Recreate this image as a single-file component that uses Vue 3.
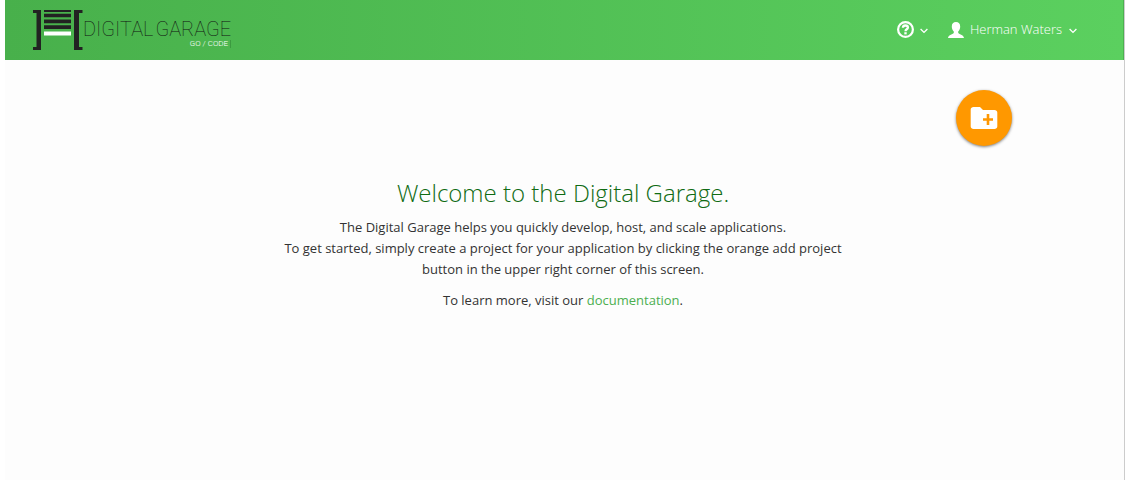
<script setup>
const user = 'Herman Waters'
</script>

<template>
  <div class="page">
    <header class="bar">
      <a class="brand" href="#" aria-label="Digital Garage">
        <svg class="mark" width="50" height="40" viewBox="0 0 50 40" aria-hidden="true">
          <g fill="#222">
            <path d="M0 0h8v40H0v-3h3.500V3H0z" />
            <path d="M49.500 0H41v40h8.500v-3H46V3h3.500z" />
            <path d="M11 0h27v2H11zM11 3.800h27v3.500H11zM11 9.500h27v3.800H11zM11 15.200h27v3.800H11z" />
          </g>
          <path fill="#fff" d="M11 21.500h27v4H11z" />
        </svg>
        <span class="words">
          <span class="name"><span>DIGITAL</span><span>GARAGE</span></span>
          <span class="tag">GO / CODE <i class="cursor"></i></span>
        </span>
      </a>
      <nav class="tools">
        <button class="tool" type="button" aria-label="Help">
          <svg width="17" height="17" viewBox="0 0 17 17" fill="none" stroke="#fff" aria-hidden="true">
            <circle cx="8.500" cy="8.500" r="7.400" stroke-width="2.200" />
            <path d="M5.900 6.800C6 4.900 7.100 4.500 8.400 4.500c1.500 0 2.500.8 2.500 2 0 1.800-2.400 1.700-2.400 3.700" stroke-width="2.300" />
            <path d="M7.300 11.200h2.400v2.200H7.300z" fill="#fff" stroke="none" />
          </svg>
          <svg class="chevron" width="8" height="6" viewBox="0 0 8 6" fill="none" stroke="#fff" stroke-width="1.300" aria-hidden="true"><path d="M.6 1 4 4.400 7.400 1" /></svg>
        </button>
        <button class="tool" type="button">
          <svg width="16" height="16" viewBox="0 0 16 16" fill="#fff" aria-hidden="true">
            <path d="M8 0c2.700 0 4.200 1.800 4.200 4.400 0 2-.7 3.900-2 5v1.500c.3 1 5.600 1.800 5.800 5.100H0c.2-3.300 5.500-4.100 5.800-5.100V9.400c-1.300-1.100-2-3-2-5C3.800 1.800 5.300 0 8 0z" />
          </svg>
          <span class="user">{{ user }}</span>
          <svg class="chevron" width="8" height="6" viewBox="0 0 8 6" fill="none" stroke="#fff" stroke-width="1.300" aria-hidden="true"><path d="M.6 1 4 4.400 7.400 1" /></svg>
        </button>
      </nav>
    </header>
    <main class="content">
      <div class="actions">
        <button class="add" type="button" aria-label="Add project">
          <svg width="28" height="28" viewBox="0 0 28 28" aria-hidden="true">
            <path fill="#fff" d="M3.500 3H10l3 3h11.500C26 6 27.300 7 27.300 8.500v14c0 1.500-1.300 2.500-2.800 2.500h-21C2 25 .7 24 .7 22.500v-17C.7 4 2 3 3.500 3z" />
            <path fill="#ff9800" d="M16.700 10h2.600v4.200H23v2.600h-3.700V21h-2.600v-4.200H13v-2.600h3.700z" />
          </svg>
        </button>
      </div>
      <section class="welcome">
        <h1>Welcome to the Digital Garage.</h1>
        <p>The Digital Garage helps you quickly develop, host, and scale applications.<br />To get started, simply create a project for your application by clicking the orange add project button in the upper right corner of this screen.</p>
        <p>To learn more, visit our <a href="#">documentation</a>.</p>
      </section>
    </main>
  </div>
</template>

<style>
body {
  background: #fff;
}
</style>

<style scoped>
.page {
  box-sizing: border-box;
  min-height: 100vh;
  margin: 0 5px;
  border-right: 1px solid #ccc;
  background: #fdfdfd;
  color: #333;
  font-family: "Open Sans", sans-serif;
  font-size: 13px;
  line-height: 21px;
}
.bar {
  box-sizing: border-box;
  display: flex;
  align-items: center;
  justify-content: space-between;
  height: 60px;
  padding: 0 47px 0 28px;
  background: linear-gradient(to right, #48b04b, #5bd05f);
  box-shadow: inset -1px 0 #4cb050;
}
.brand {
  display: flex;
  color: #111;
  text-decoration: none;
}
.words {
  display: flex;
  flex-direction: column;
  padding-top: 8px;
  font-family: Roboto, sans-serif;
  font-weight: 100;
}
.name {
  display: flex;
  gap: 2px;
  font-size: 20px;
  line-height: 22px;
}
.tag {
  display: flex;
  justify-content: flex-end;
  gap: 2px;
  color: #fff;
  font-size: 8px;
  font-weight: 300;
  line-height: 8px;
}
.cursor {
  width: 1px;
  background: #3c9a40;
}
.tools {
  display: flex;
  gap: 20px;
  padding-bottom: 1px;
}
.tool {
  display: flex;
  align-items: center;
  padding: 0;
  border: 0;
  background: none;
  color: #fff;
  font: 300 13px/21px "Open Sans", sans-serif;
}
.user {
  margin: 0 1px 0 6px;
}
.chevron {
  margin: 2px 0 0 6px;
}
.content {
  padding: 30px 112px 0 109px;
}
.actions {
  display: flex;
  justify-content: flex-end;
}
.add {
  display: flex;
  align-items: center;
  justify-content: center;
  width: 56px;
  height: 56px;
  padding: 0;
  border: 0;
  border-radius: 50%;
  background: #ff9800;
  box-shadow: 0 1px 3px rgba(0, 0, 0, 0.5);
}
.welcome {
  max-width: 580px;
  margin: 32px auto 0;
  text-align: center;
}
h1 {
  margin: 0 0 10px;
  color: #106b13;
  font-size: 24px;
  font-weight: 300;
  line-height: 29px;
}
p {
  margin: 0 0 10px;
}
p a {
  color: #4caf50;
  text-decoration: none;
}
</style>
